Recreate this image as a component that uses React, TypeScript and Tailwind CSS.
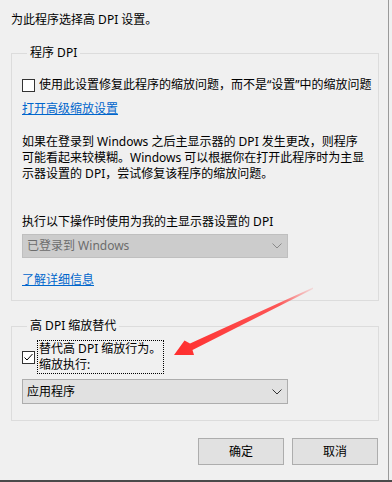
import React from "react";

const FONT = { fontFamily: '"Noto Sans", "Noto Sans CJK SC", sans-serif' };

function Chevron({ color }: { color: string }) {
  return (
    <svg width="10" height="6" viewBox="0 0 10 6" fill="none" stroke={color} strokeWidth="1">
      <polyline points="0.5,0.5 5,5 9.5,0.5" />
    </svg>
  );
}

function Select({ label, disabled }: { label: string; disabled?: boolean }) {
  return (
    <div
      className={
        disabled
          ? "flex h-[24px] w-[266px] items-center justify-between border border-[#bfbfbf] bg-[#cccccc] pl-[4px] pr-[5px] text-[#6d6d6d]"
          : "flex h-[25px] w-[266px] items-center justify-between border border-[#adadad] bg-[#e1e1e1] pl-[4px] pr-[5px] text-black"
      }
    >
      <span>{label}</span>
      <Chevron color={disabled ? "#8a8a8a" : "#333333"} />
    </div>
  );
}

function CheckBox({ checked }: { checked?: boolean }) {
  return (
    <div className="flex h-[13px] w-[13px] shrink-0 items-center justify-center border border-[#333333] bg-white">
      {checked && (
        <svg width="11" height="11" viewBox="0 0 11 11" fill="none" stroke="#000" strokeWidth="1">
          <polyline points="1.5,5.5 4,8 9.5,2" />
        </svg>
      )}
    </div>
  );
}

function Arrow() {
  return (
    <svg className="pointer-events-none absolute left-0 top-0" width="392" height="482" viewBox="0 0 392 482">
      <defs>
        <linearGradient id="arrowFade" x1="312" y1="288" x2="180" y2="352" gradientUnits="userSpaceOnUse">
          <stop offset="0" stopColor="#ff4d4d" stopOpacity="0.15" />
          <stop offset="0.25" stopColor="#ff3b3b" stopOpacity="0.85" />
          <stop offset="1" stopColor="#ff3030" />
        </linearGradient>
      </defs>
      <polygon
        points="313,287.5 190,343.5 184.5,340.5 174,355 194,355 192.5,350 313,289"
        fill="url(#arrowFade)"
      />
    </svg>
  );
}

export default function App() {
  return (
    <div className="relative h-[482px] w-[392px] overflow-hidden bg-[#f0f0f0] text-[12px] leading-[16px] text-black" style={FONT}>
      <div className="h-[480px] w-[389px] border-r border-[#9a9a9a]">
        <p className="pl-[11px] pt-[12px]">为此程序选择高 DPI 设置。</p>

        <fieldset className="ml-[11px] mt-[17px] w-[368px] border border-[#dcdcdc] pb-[12px] pl-[10px]">
          <legend className="ml-[5px] px-[3px]">程序 DPI</legend>
          <div className="flex items-center pt-[16px]">
            <CheckBox />
            <span className="ml-[4px] whitespace-nowrap">使用此设置修复此程序的缩放问题，而不是“设置”中的缩放问题</span>
          </div>
          <a className="mt-[8px] block w-fit text-[#0066cc] underline">打开高级缩放设置</a>
          <p className="mt-[17px] whitespace-nowrap">
            如果在登录到 Windows 之后主显示器的 DPI 发生更改，则程序
            <br />
            可能看起来较模糊。Windows 可以根据你在打开此程序时为主显
            <br />
            示器设置的 DPI，尝试修复该程序的缩放问题。
          </p>
          <p className="mt-[32px]">执行以下操作时使用为我的主显示器设置的 DPI</p>
          <div className="mt-[4px]">
            <Select label="已登录到 Windows" disabled />
          </div>
          <a className="mt-[14px] block w-fit text-[#0066cc] underline">了解详细信息</a>
        </fieldset>

        <fieldset className="ml-[11px] mt-[17px] w-[368px] border border-[#dcdcdc] pb-[16px] pl-[10px]">
          <legend className="ml-[5px] px-[3px]">高 DPI 缩放替代</legend>
          <div className="flex items-center pt-[6px]">
            <CheckBox checked />
            <div className="ml-[2px] border border-dotted border-black pl-[1px] pr-[2px]">
              替代高 DPI 缩放行为。
              <br />
              缩放执行:
            </div>
          </div>
          <div className="mt-[5px]">
            <Select label="应用程序" />
          </div>
        </fieldset>

        <div className="ml-[11px] mt-[17px] flex w-[368px] justify-end gap-[8px] pr-[1px]">
          <button className="h-[27px] w-[86px] border border-[#adadad] bg-[#e1e1e1]">确定</button>
          <button className="h-[27px] w-[86px] border border-[#adadad] bg-[#e1e1e1]">取消</button>
        </div>
      </div>
      <div className="h-[2px] w-full bg-[#4a4a4a]" />
      <Arrow />
    </div>
  );
}
